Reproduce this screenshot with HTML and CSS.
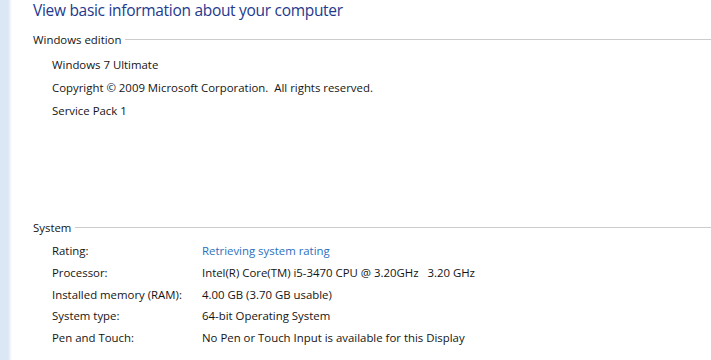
FILE: index.html
```html
<!DOCTYPE html>
<html lang="en">
<head>
<meta charset="UTF-8">
<title>System</title>
<link rel="stylesheet" href="styles.css">
</head>
<body>

<div class="window">
  <div class="sidebar"></div>

  <div class="main">
    <h1 class="title">View basic information about your computer</h1>

    <div class="section">
      <div class="section-head"><span>Windows edition</span></div>
      <div class="edition">
        <div class="line">Windows 7 Ultimate</div>
        <div class="line">Copyright © 2009 Microsoft Corporation.&nbsp; All rights reserved.</div>
        <div class="line">Service Pack 1</div>
      </div>
    </div>

    <div class="section system">
      <div class="section-head"><span>System</span></div>
      <div class="props">
        <div class="row"><span class="key">Rating:</span><span class="val link">Retrieving system rating</span></div>
        <div class="row"><span class="key">Processor:</span><span class="val">Intel(R) Core(TM) i5-3470 CPU @ 3.20GHz&nbsp;&nbsp; 3.20 GHz</span></div>
        <div class="row"><span class="key">Installed memory (RAM):</span><span class="val">4.00 GB (3.70 GB usable)</span></div>
        <div class="row"><span class="key">System type:</span><span class="val">64-bit Operating System</span></div>
        <div class="row"><span class="key">Pen and Touch:</span><span class="val">No Pen or Touch Input is available for this Display</span></div>
      </div>
    </div>
  </div>
</div>

</body>
</html>
```

FILE: styles.css
```css
body {
  margin: 0;
  background: #ffffff;
  font-family: 'Open Sans', 'Noto Sans', sans-serif;
  font-size: 11.4px;
  color: #141414;
}
.window {
  display: flex;
  height: 360px;
  overflow: hidden;
}
.sidebar {
  width: 12px;
  flex-shrink: 0;
  background: linear-gradient(to right, #dce7f5 0, #dce7f5 8px, #ffffff 12px);
}
.main {
  flex: 1;
  padding-left: 21px;
}
.title {
  margin: 0;
  font-size: 15.5px;
  font-weight: normal;
  letter-spacing: -0.3px;
  line-height: 20px;
  color: #23398e;
}
.section {
  margin-top: 10px;
}
.section-head {
  display: flex;
  align-items: center;
  gap: 4px;
  height: 18px;
}
.section-head::after {
  content: '';
  flex: 1;
  border-top: 1px solid #cccccc;
}
.edition {
  padding-left: 19px;
  padding-top: 5px;
}
.line {
  height: 23px;
  line-height: 23px;
}
.system {
  margin-top: 96px;
}
.props {
  padding-left: 19px;
  padding-top: 4px;
}
.row {
  display: flex;
  height: 21.75px;
  line-height: 22px;
}
.key {
  width: 150px;
  flex-shrink: 0;
}
.link {
  color: #2a6fc0;
}
```
